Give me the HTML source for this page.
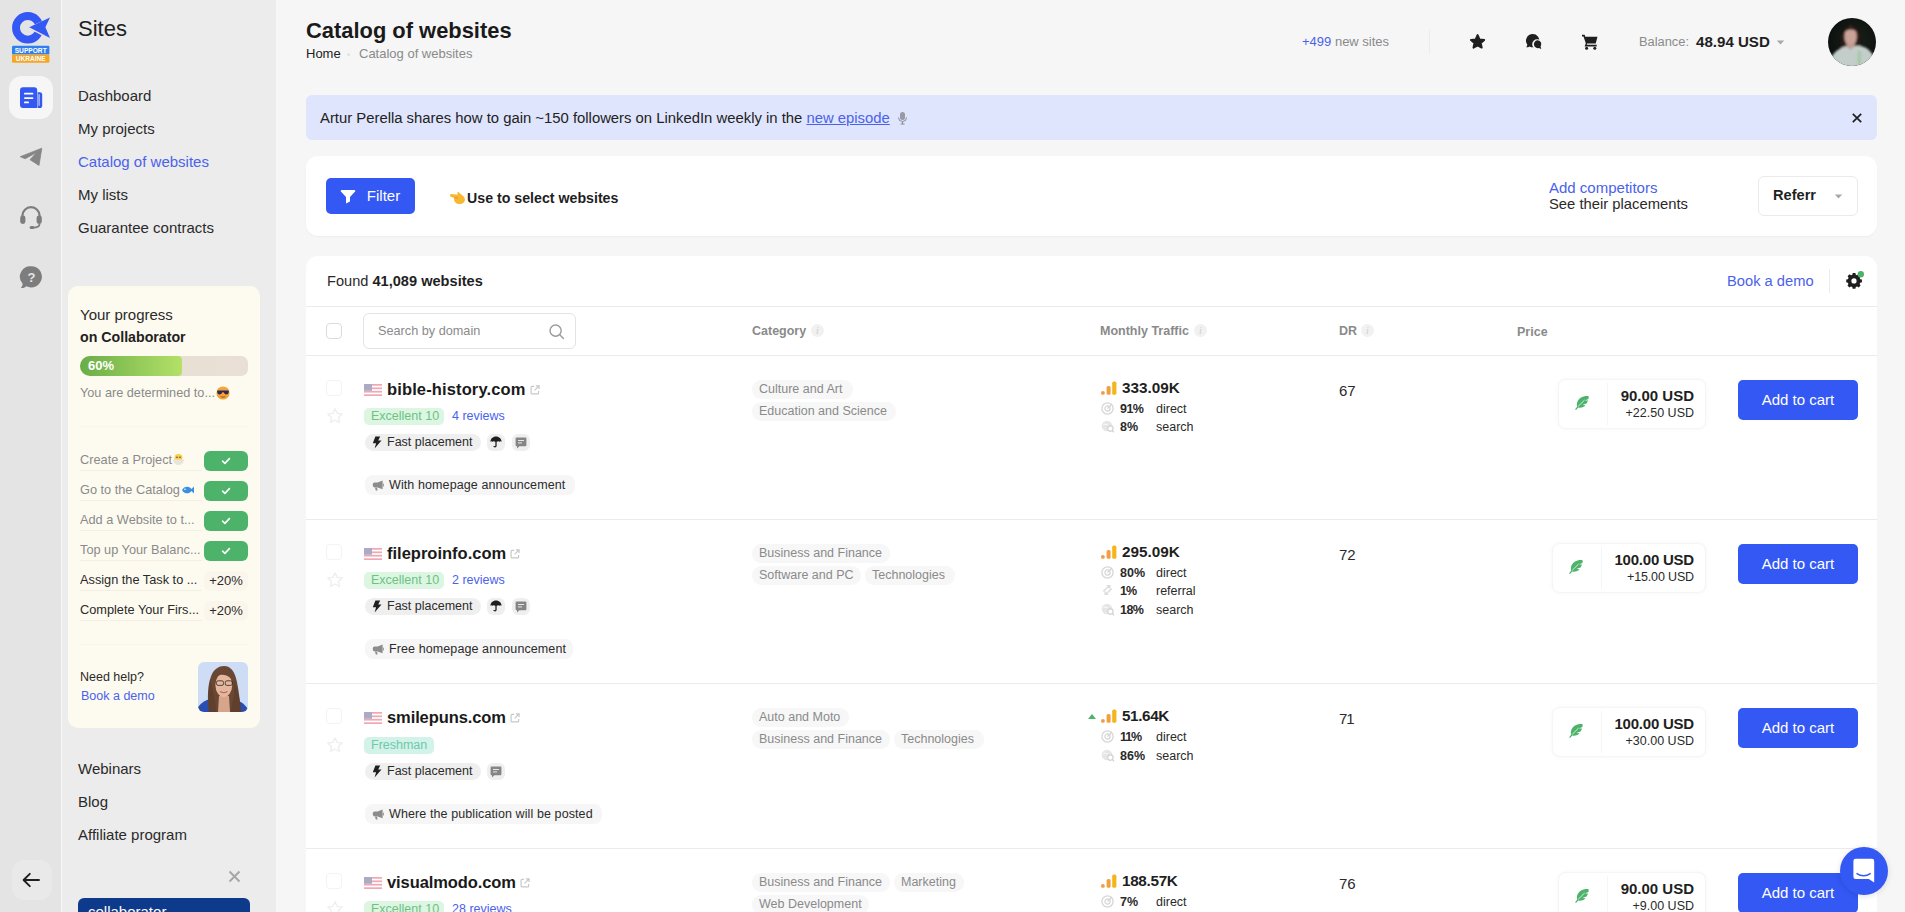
<!DOCTYPE html>
<html lang="en">
<head>
<meta charset="utf-8">
<title>Catalog of websites</title>
<style>
*{box-sizing:border-box;margin:0;padding:0}
html,body{width:1905px;height:912px;overflow:hidden;background:#f6f6f6;font-family:"Liberation Sans",sans-serif;color:#1f1f1f}
a{text-decoration:none;color:inherit}
.abs{position:absolute}
#rail{position:absolute;left:0;top:0;width:61px;height:912px;background:#e4e4e4}
#side{position:absolute;left:62px;top:0;width:214px;height:912px;background:#ececec}
#main{position:absolute;left:276px;top:0;width:1629px;height:912px;background:#f6f6f6}
.t{position:absolute;white-space:nowrap;line-height:1}
.blue{color:#4a62ea}
.grey{color:#8a8a8a}
/* sidebar */
.menu{position:absolute;left:78px;font-size:15px;color:#2a2a2a;white-space:nowrap;line-height:18px}
/* cards */
.card{position:absolute;background:#fff;border-radius:12px}
.btn{position:absolute;background:#3358f4;color:#fff;border-radius:5px;text-align:center;white-space:nowrap}
.pill{position:absolute;background:#f1f1f1;border-radius:9px;height:19px;line-height:19px;font-size:13px;color:#2b2b2b;white-space:nowrap}
.cat{position:absolute;background:#f7f7f7;border-radius:9px;height:19px;line-height:19px;font-size:13px;color:#8a8a8a;white-space:nowrap;padding:0 7px}
.hline{position:absolute;left:306px;width:1571px;height:1px;background:#ebebeb}
.cb{position:absolute;width:16px;height:16px;border:1px solid #e3e3e3;border-radius:4px;background:#fff}
</style>
</head>
<body>
<div id="main"></div>
<div id="side"></div>
<div id="rail"></div>

<!-- RAIL -->
<div id="rail-items">
<svg class="abs" style="left:8px;top:8px" width="48" height="60" viewBox="0 0 48 60">
  <circle cx="19.8" cy="19.8" r="11.8" fill="none" stroke="#3358f4" stroke-width="7.9"/>
  <path d="M19.2 19.7 L62.7 0.4 L62.7 42 L62 42 L20.6 20.5 Z" fill="#e4e4e4"/>
  <path d="M21.2 19.2 L42 9.6 L37.4 19.2 L42 30 Z" fill="#3358f4"/>
  <rect x="4" y="37.800" width="37.400" height="8.800" rx="1.200" fill="#2f80ed"/>
  <rect x="4" y="46.400" width="37.400" height="8.400" rx="1.200" fill="#f5a623"/>
  <text x="22.700" y="44.900" font-family="Liberation Sans, sans-serif" font-weight="bold" font-size="7.4" fill="#fff" text-anchor="middle" textLength="32" lengthAdjust="spacingAndGlyphs">SUPPORT</text>
  <text x="22.700" y="53.300" font-family="Liberation Sans, sans-serif" font-weight="bold" font-size="7.4" fill="#fff" text-anchor="middle" textLength="30" lengthAdjust="spacingAndGlyphs">UKRAINE</text>
</svg>
<div class="abs" style="left:9px;top:76px;width:44px;height:43px;border-radius:13px;background:#f6f6f6"></div>
<svg class="abs" style="left:19px;top:86px" width="24" height="24" viewBox="0 0 24 24">
  <path d="M4 1.2h11.2a3 3 0 0 1 3 3V22H4a3 3 0 0 1-3-3V4.2a3 3 0 0 1 3-3z" fill="#3358f4"/>
  <path d="M18.6 6.2h2.2a2.4 2.4 0 0 1 2.4 2.4V19.4a2.6 2.6 0 0 1-2.6 2.6h-2z" fill="#3358f4"/>
  <rect x="19.3" y="8" width="1.6" height="12" rx=".8" fill="#fff" opacity=".55"/>
  <rect x="5" y="6.8" width="9.4" height="1.7" rx=".85" fill="#fff"/>
  <rect x="5" y="11.2" width="9.4" height="1.7" rx=".85" fill="#fff"/>
  <rect x="5" y="15.6" width="5" height="1.7" rx=".85" fill="#fff"/>
</svg>
<svg class="abs" style="left:19px;top:145px" width="25" height="24" viewBox="0 0 25 24">
  <path d="M1.200 11.700 L22.800 3.200 L20 20.400 L11 14.700 L17.600 7.400 L6.200 13.700 Z" fill="#858585" stroke="#858585" stroke-width=".8" stroke-linejoin="round"/>
</svg>
<svg class="abs" style="left:19px;top:205px" width="24" height="25" viewBox="0 0 24 25">
  <path d="M3.4 12.4v-1.6a8.6 8.6 0 0 1 17.2 0v1.6" fill="none" stroke="#7d7d7d" stroke-width="2.2"/>
  <rect x="1.2" y="10.6" width="5.2" height="8.4" rx="2.4" fill="#7d7d7d"/>
  <rect x="17.6" y="10.6" width="5.2" height="8.4" rx="2.4" fill="#7d7d7d"/>
  <path d="M20.6 18.4c0 2.8-2.4 4.2-6.4 4.2" fill="none" stroke="#7d7d7d" stroke-width="1.8"/>
  <rect x="10.6" y="21" width="4.8" height="3" rx="1.5" fill="#7d7d7d"/>
</svg>
<svg class="abs" style="left:19px;top:265px" width="24" height="25" viewBox="0 0 24 25">
  <path d="M12.4 1.2a10.6 10.6 0 1 1-5 20 c-1.6 1.4-3.6 2-5.6 1.8 1.2-1.2 1.8-2.6 1.8-4.2a10.6 10.6 0 0 1 8.8-17.600z" fill="#7d7d7d"/>
  <text x="12.4" y="16.6" font-family="Liberation Sans, sans-serif" font-weight="bold" font-size="13" fill="#e4e4e4" text-anchor="middle">?</text>
</svg>
<div class="abs" style="left:12px;top:860px;width:40px;height:40px;border-radius:12px;background:#e9e9e9"></div>
<svg class="abs" style="left:21px;top:871px" width="20" height="18" viewBox="0 0 20 18">
  <path d="M8.800 2.800 L2.600 9 L8.800 15.200 M2.800 9 H18" fill="none" stroke="#1f1f1f" stroke-width="1.9" stroke-linecap="round" stroke-linejoin="round"/>
</svg>
</div>

<!-- SIDEBAR -->
<div class="t" style="left:78px;top:18px;font-size:22px;color:#222">Sites</div>
<div class="menu" style="top:87px">Dashboard</div>
<div class="menu" style="top:120px">My projects</div>
<div class="menu" style="top:153px;color:#4a62ea">Catalog of websites</div>
<div class="menu" style="top:186px">My lists</div>
<div class="menu" style="top:219px">Guarantee contracts</div>
<div id="progress">
<div class="abs" style="left:68px;top:286px;width:192px;height:442px;border-radius:10px;background:#fdfbf0"></div>
<div class="t" style="left:80px;top:307px;font-size:15px;color:#2a2a2a">Your progress</div>
<div class="t" style="left:80px;top:330px;font-size:14.200px;font-weight:bold;color:#222">on Collaborator</div>
<div class="abs" style="left:80px;top:356px;width:168px;height:20px;border-radius:10px 7px 7px 10px;background:linear-gradient(90deg,#e8e2d2,#e9dfd6)"></div>
<div class="abs" style="left:80px;top:356px;width:102px;height:20px;border-radius:10px 4px 4px 10px;background:linear-gradient(90deg,#69ad48,#b4e167)"></div>
<div class="t" style="left:88px;top:359px;font-size:13px;font-weight:bold;color:#fff">60%</div>
<div class="t" style="left:80px;top:386px;font-size:12.700px;color:#8a8a8a">You are determined to...<svg style="vertical-align:-3px;margin-left:1px" width="14" height="14" viewBox="0 0 14 14"><circle cx="7" cy="7" r="6.600" fill="#f5a33a"/><path d="M1.200 4.600h11.600v1.200c0 1.600-1 2.600-2.400 2.600S8 7.400 7.600 6.200h-1.200C6 7.400 5 8.400 3.600 8.400S1.200 7.400 1.200 5.800z" fill="#2a2a55"/><path d="M4.600 10.400c1.400 1 3.400 1 4.800 0" stroke="#8a4a10" stroke-width=".9" fill="none"/></svg></div>
<div class="abs" style="left:80px;top:426px;width:168px;height:1px;background:#f8f5ea"></div>
<div class="t" style="left:80px;top:453px;font-size:12.750px;color:#8a8a8a;border-bottom:1px solid #f4efe2;padding-bottom:3px;width:122px;overflow:hidden">Create a Project<svg style="vertical-align:-2px" width="13" height="13" viewBox="0 0 13 13"><circle cx="6.500" cy="5" r="4" fill="#f8cf4d"/><path d="M1 6.500h11a5.500 5.500 0 0 1-11 0z" fill="#e9e4dc"/><circle cx="5" cy="4.200" r=".7" fill="#333"/><circle cx="8" cy="4.200" r=".7" fill="#333"/></svg></div>
<div class="abs" style="left:204px;top:451px;width:44px;height:20px;border-radius:6px;background:#4db36a"></div>
<svg class="abs" style="left:220px;top:456px" width="12" height="10" viewBox="0 0 12 10"><path d="M2.600 5.200 L4.900 7.300 L9.400 2.700" fill="none" stroke="#fff" stroke-width="1.700" stroke-linecap="round" stroke-linejoin="round"/></svg>
<div class="t" style="left:80px;top:484px;font-size:12.750px;color:#8a8a8a;border-bottom:1px solid #f4efe2;padding-bottom:3px;width:122px;overflow:hidden">Go to the Catalog<svg style="vertical-align:-2px;margin-left:1px" width="14" height="12" viewBox="0 0 14 12"><path d="M1 6c2-4 7-4.500 9.500-1L13 2.500v7L10.500 7C8 10.500 3 10 1 6z" fill="#3b8fe0"/><circle cx="4" cy="5.200" r=".8" fill="#fff"/></svg></div>
<div class="abs" style="left:204px;top:481px;width:44px;height:20px;border-radius:6px;background:#4db36a"></div>
<svg class="abs" style="left:220px;top:486px" width="12" height="10" viewBox="0 0 12 10"><path d="M2.600 5.200 L4.900 7.300 L9.400 2.700" fill="none" stroke="#fff" stroke-width="1.700" stroke-linecap="round" stroke-linejoin="round"/></svg>
<div class="t" style="left:80px;top:514px;font-size:12.750px;color:#8a8a8a;border-bottom:1px solid #f4efe2;padding-bottom:3px;width:122px;overflow:hidden">Add a Website to t...</div>
<div class="abs" style="left:204px;top:511px;width:44px;height:20px;border-radius:6px;background:#4db36a"></div>
<svg class="abs" style="left:220px;top:516px" width="12" height="10" viewBox="0 0 12 10"><path d="M2.600 5.200 L4.900 7.300 L9.400 2.700" fill="none" stroke="#fff" stroke-width="1.700" stroke-linecap="round" stroke-linejoin="round"/></svg>
<div class="t" style="left:80px;top:544px;font-size:12.750px;color:#8a8a8a;border-bottom:1px solid #f4efe2;padding-bottom:3px;width:122px;overflow:hidden">Top up Your Balanc...</div>
<div class="abs" style="left:204px;top:541px;width:44px;height:20px;border-radius:6px;background:#4db36a"></div>
<svg class="abs" style="left:220px;top:546px" width="12" height="10" viewBox="0 0 12 10"><path d="M2.600 5.200 L4.900 7.300 L9.400 2.700" fill="none" stroke="#fff" stroke-width="1.700" stroke-linecap="round" stroke-linejoin="round"/></svg>
<div class="t" style="left:80px;top:574px;font-size:12.750px;color:#2a2a2a;border-bottom:1px solid #f4efe2;padding-bottom:3px;width:122px;overflow:hidden">Assign the Task to ...</div>
<div class="abs" style="left:204px;top:571px;width:44px;height:20px;border-radius:6px;background:#faf6ec;font-size:13px;line-height:20px;text-align:center;color:#2a2a2a">+20%</div>
<div class="t" style="left:80px;top:604px;font-size:12.750px;color:#2a2a2a;border-bottom:1px solid #f4efe2;padding-bottom:3px;width:122px;overflow:hidden">Complete Your Firs...</div>
<div class="abs" style="left:204px;top:601px;width:44px;height:20px;border-radius:6px;background:#faf6ec;font-size:13px;line-height:20px;text-align:center;color:#2a2a2a">+20%</div>

<div class="abs" style="left:80px;top:644px;width:168px;height:1px;background:#f8f5ea"></div>
<div class="t" style="left:80px;top:671px;font-size:12.5px;color:#2a2a2a">Need help?</div>
<div class="t" style="left:81px;top:690px;font-size:12.5px;color:#4a62ea">Book a demo</div>
<svg class="abs" style="left:198px;top:662px;border-radius:6px" width="50" height="50" viewBox="0 0 50 50">
  <defs><filter id="phb" x="-10%" y="-10%" width="120%" height="120%"><feGaussianBlur stdDeviation=".55"/></filter></defs>
  <rect width="50" height="50" fill="#cfdcf6"/>
  <g filter="url(#phb)">
  <path d="M0 50 L0 45 C4 40 8 38 12 37 L14 50Z" fill="#2a4db0"/>
  <path d="M50 50 L50 47 C47 43 44 40 40 38.500 L38 50Z" fill="#2a4db0"/>
  <path d="M11 50 C9 36 10 22 12.500 16 C15 7 21 4 26 4 C33 4 37 10 39 20 C41 30 42 40 43 50 Z" fill="#6a4733"/>
  <path d="M21 34 L31 34 L32 50 L20 50Z" fill="#d6a58b"/>
  <ellipse cx="25.800" cy="23" rx="8.400" ry="12" fill="#e4b79e"/>
  <path d="M16 20 C17 10 24 7 28 8 C34 9 36 16 36.500 22 C33 15 28 12 22 13 C19 14 17 17 16 20z" fill="#6a4733"/>
  <path d="M12.500 18 C14 24 15 30 16.500 36 C17.500 41 18 46 18 50 L11 50 C10 38 10.500 26 12.500 18z" fill="#5f3f2d"/>
  <path d="M35.500 20 C37 28 36 36 34 42 L33 50 L43 50 C42 38 40 26 35.500 20z" fill="#5f3f2d"/>
  <rect x="18.500" y="18.800" width="7" height="4.600" rx="1.600" fill="none" stroke="#2a2320" stroke-width=".9" opacity=".85"/>
  <rect x="27.300" y="18.800" width="7" height="4.600" rx="1.600" fill="none" stroke="#2a2320" stroke-width=".9" opacity=".85"/>
  <path d="M22 29.500c2.400 1.600 5 1.600 7.400 0" stroke="#b9705e" stroke-width="1.200" fill="none"/>
  </g>
</svg>
<svg class="abs" style="left:228px;top:870px" width="13" height="13" viewBox="0 0 13 13"><path d="M1.500 1.500 L11.500 11.500 M11.500 1.500 L1.500 11.500" stroke="#a6a6a6" stroke-width="1.900" fill="none"/></svg>
<div class="abs" style="left:78px;top:898px;width:172px;height:20px;border-radius:6px 6px 0 0;background:#0d3a8a;overflow:hidden"><div class="t" style="left:10px;top:6px;font-size:15px;color:#fff">collaborator</div></div>
</div>
<div class="menu" style="top:760px">Webinars</div>
<div class="menu" style="top:793px">Blog</div>
<div class="menu" style="top:826px">Affiliate program</div>

<!-- HEADER -->
<div class="t" style="left:306px;top:20px;font-size:21.900px;font-weight:bold;color:#1a1a1a">Catalog of websites</div>
<div class="t" style="left:306px;top:47px;font-size:13px;color:#222">Home</div>
<div class="t" style="left:359px;top:47px;font-size:13px;color:#8a8a8a">Catalog of websites</div>
<div class="abs" style="left:347px;top:53px;width:3px;height:3px;border-radius:2px;background:#e2e2e2"></div>
<div id="topright">
<div class="t" style="left:1302px;top:35px;font-size:13px;color:#8a8a8a"><span style="color:#4a62ea">+499</span> new sites</div>
<div class="abs" style="left:1429px;top:30px;width:1px;height:24px;background:#ececec"></div>
<svg class="abs" style="left:1469px;top:33px" width="18" height="18" viewBox="0 0 18 18"><path d="M8.600 2.100 L10.500 6.400 L15.200 6.900 L11.700 10 L12.700 14.600 L8.600 12.300 L4.500 14.600 L5.500 10 L2 6.900 L6.700 6.400 Z" fill="#1f1f1f" stroke="#1f1f1f" stroke-width="2" stroke-linejoin="round"/></svg>
<svg class="abs" style="left:1525px;top:33px" width="18" height="18" viewBox="0 0 18 18"><path d="M7.600 1a6.600 6.600 0 0 0-5.300 10.500c0 1-.4 2-1.100 2.800 1.200.1 2.400-.2 3.400-.9a6.600 6.600 0 1 0 3-12.400z" fill="#1f1f1f"/><circle cx="12.200" cy="11.200" r="5" fill="#f6f6f6"/><path d="M12.300 7.200a4 4 0 0 1 3.300 6.300c0 .8.300 1.500.8 2.100-.9.100-1.700-.1-2.400-.6a4 4 0 1 1-1.700-7.800z" fill="#1f1f1f"/></svg>
<svg class="abs" style="left:1581px;top:33px" width="18" height="18" viewBox="0 0 18 18"><path d="M1 1.800h2.600l.7 2h12.200l-1.800 6.600H6.200l-.5 1.400h10v1.600H3.600l1.200-3.200L2.500 3.400H1z" fill="#1f1f1f"/><circle cx="5.600" cy="15.200" r="1.500" fill="#1f1f1f"/><circle cx="13.800" cy="15.200" r="1.500" fill="#1f1f1f"/></svg>
<div class="t" style="left:1639px;top:35.800px;font-size:12.850px;color:#8a8a8a">Balance:</div>
<div class="t" style="left:1696px;top:33.500px;font-size:15.100px;font-weight:bold;color:#1f1f1f">48.94 USD</div>
<svg class="abs" style="left:1776px;top:40px" width="9" height="5" viewBox="0 0 9 5"><path d="M.8.600h7.400L4.500 4.400z" fill="#a8a8a8"/></svg>
<svg class="abs" style="left:1828px;top:18px;border-radius:24px" width="48" height="48" viewBox="0 0 48 48">
  <defs><radialGradient id="avg" cx="55%" cy="45%" r="65%"><stop offset="0" stop-color="#1a2119"/><stop offset="1" stop-color="#0a0e0c"/></radialGradient>
  <filter id="avb" x="-20%" y="-20%" width="140%" height="140%"><feGaussianBlur stdDeviation=".9"/></filter></defs>
  <rect width="48" height="48" fill="url(#avg)"/>
  <g filter="url(#avb)">
  <path d="M13 32 C11 18 15 8 23 8 C31 8 34 16 32 30 Z" fill="#2c1a15"/>
  <ellipse cx="22.600" cy="18.600" rx="6.200" ry="10" fill="#c9a398"/>
  <path d="M16.400 14 C17 7 28 7 29 14 C25.500 10.500 20 10.500 16.400 14z" fill="#2c1a15"/>
  <path d="M4 38 C8 32 14 29 18.500 28 L22 31 L27 28 C33 27 40 29 45 37 L44 50 L4 50 Z" fill="#c3cdca"/>
  <path d="M18.500 28 L22 31.500 L27 28 L26 25 L19 25Z" fill="#c39d90"/>
  <path d="M30 33 L33 33 L32.500 47 L29.500 47Z" fill="#9dc49a" opacity=".8"/>
  </g>
</svg>
</div>

<!-- BANNER -->
<div class="abs" style="left:306px;top:95px;width:1571px;height:45px;background:#dfe5fd;border-radius:6px"></div>
<div class="t" style="left:320px;top:111px;font-size:14.850px;color:#222">Artur Perella shares how to gain ~150 followers on LinkedIn weekly in the <span class="blue" style="text-decoration:underline">new episode</span></div>

<svg class="abs" style="left:1851px;top:112px" width="12" height="12" viewBox="0 0 12 12"><path d="M1.800 1.800 L10.200 10.200 M10.200 1.800 L1.800 10.200" stroke="#1f1f1f" stroke-width="1.700" fill="none"/></svg>
<svg class="abs" style="left:897px;top:111px" width="11" height="14" viewBox="0 0 11 14"><rect x="3" y="1" width="5" height="8" rx="2.500" fill="#9a9aa6"/><path d="M1.500 6.500a4 4 0 0 0 8 0M5.500 10.500V13M3.500 13h4" stroke="#8a8a96" stroke-width="1" fill="none"/></svg>
<!-- FILTER CARD -->
<div class="card" style="left:306px;top:156px;width:1571px;height:80px;box-shadow:0 1px 2px rgba(0,0,0,.04)"></div>
<div class="btn" style="left:326px;top:178px;width:89px;height:36px;line-height:36px;font-size:15px"><span style="margin-left:26px">Filter</span></div>

<svg class="abs" style="left:340px;top:189px" width="16" height="15" viewBox="0 0 16 15"><path d="M1.600 1h12.800a.9.900 0 0 1 .7 1.500L10 8v4.600l-4 1.800V8L.9 2.500A.9.900 0 0 1 1.600 1z" fill="#fff"/></svg>
<svg class="abs" style="left:449px;top:189px" width="17" height="16" viewBox="0 0 17 16"><path d="M1 6.500c0-1 .8-1.600 1.700-1.500l6 .7c-.6-1.200-.4-2.400.6-2.600 1 .6 2.400 2.200 3.600 3 1.800 1.100 3 2.600 3 4.600 0 2.600-2.200 4.300-5 4.300-2.600 0-4.500-1-5.300-2.600-.6-1.100-.6-2.300-.4-3.300L2.400 8C1.600 7.900 1 7.300 1 6.500z" fill="#f7b731"/><path d="M5.600 9c1.200-.6 2.800-.4 3.400.6" stroke="#d48a10" stroke-width=".8" fill="none"/></svg>
<div class="t" style="left:467px;top:190.500px;font-size:14.200px;font-weight:bold;color:#1f1f1f">Use to select websites</div>
<div class="t" style="left:1549px;top:180px;font-size:15px;color:#4a62ea">Add competitors</div>
<div class="t" style="left:1549px;top:197px;font-size:14.800px;color:#2a2a2a">See their placements</div>
<div class="abs" style="left:1758px;top:176px;width:100px;height:40px;border:1px solid #eaeaea;border-radius:6px;background:#fff"></div>
<div class="t" style="left:1773px;top:188px;font-size:14.600px;font-weight:bold;color:#1f1f1f">Referr</div>
<svg class="abs" style="left:1834px;top:194px" width="9" height="5" viewBox="0 0 9 5"><path d="M.8.600h7.400L4.500 4.400z" fill="#a8a8a8"/></svg>
<!-- TABLE CARD -->
<div class="card" style="left:306px;top:256px;width:1571px;height:700px"></div>
<div id="table">
<div class="t" style="left:327px;top:274px;font-size:14.600px;color:#2a2a2a">Found <b style="color:#1f1f1f">41,089 websites</b></div>
<div class="t" style="left:1727px;top:274px;font-size:14.700px;color:#4a62ea">Book a demo</div>
<div class="abs" style="left:1829px;top:269px;width:1px;height:24px;background:#ececec"></div>
<svg class="abs" style="left:1845px;top:271px" width="20" height="20" viewBox="0 0 20 20"><path d="M8 2.500h3l.4 1.900 1.500.7 1.700-1 2 2-1 1.700.6 1.500 1.900.400v3l-1.900.4-.6 1.500 1 1.700-2 2-1.700-1-1.500.6-.4 1.900h-3l-.4-1.900-1.500-.6-1.700 1-2-2 1-1.700-.6-1.500L1 12.700v-3l1.900-.4.600-1.500-1-1.700 2-2 1.700 1 1.500-.7z" fill="#1f1f1f" transform="translate(0.300,-0.400) scale(.92)"/><circle cx="9" cy="9.900" r="2.600" fill="#fff"/><circle cx="15.800" cy="3.200" r="3.200" fill="#4db36a"/></svg>
<div class="hline" style="top:306px"></div>
<div class="cb" style="left:326px;top:323px;border-color:#dcdcdc"></div>
<div class="abs" style="left:363px;top:313px;width:213px;height:36px;border:1px solid #e3e3e3;border-radius:6px;background:#fff"></div>
<div class="t" style="left:378px;top:325px;font-size:12.700px;color:#8a8a8a">Search by domain</div>
<svg class="abs" style="left:548px;top:323px" width="17" height="17" viewBox="0 0 17 17"><circle cx="7.600" cy="7.600" r="5.600" fill="none" stroke="#9a9a9a" stroke-width="1.400"/><path d="M11.800 11.800 L15.400 15.400" stroke="#9a9a9a" stroke-width="1.400" stroke-linecap="round"/></svg>
<div class="t" style="left:752px;top:325px;font-size:12.500px;font-weight:bold;color:#8a8a8a">Category</div>
<div class="t" style="left:1100px;top:325px;font-size:12.500px;font-weight:bold;color:#8a8a8a">Monthly Traffic</div>
<div class="t" style="left:1339px;top:325px;font-size:12.500px;font-weight:bold;color:#8a8a8a">DR</div>
<svg class="abs" style="left:811px;top:324px" width="13" height="13" viewBox="0 0 13 13"><circle cx="6.500" cy="6.500" r="6.500" fill="#f1f1f1"/><text x="6.500" y="10" font-family="Liberation Serif, serif" font-style="italic" font-size="10" fill="#cdcdcd" text-anchor="middle">i</text></svg>

<svg class="abs" style="left:1194px;top:324px" width="13" height="13" viewBox="0 0 13 13"><circle cx="6.500" cy="6.500" r="6.500" fill="#f1f1f1"/><text x="6.500" y="10" font-family="Liberation Serif, serif" font-style="italic" font-size="10" fill="#cdcdcd" text-anchor="middle">i</text></svg>

<svg class="abs" style="left:1361px;top:324px" width="13" height="13" viewBox="0 0 13 13"><circle cx="6.500" cy="6.500" r="6.500" fill="#f1f1f1"/><text x="6.500" y="10" font-family="Liberation Serif, serif" font-style="italic" font-size="10" fill="#cdcdcd" text-anchor="middle">i</text></svg>

<div class="t" style="left:1517px;top:326px;font-size:12.500px;font-weight:bold;color:#8a8a8a">Price</div>
<div class="hline" style="top:355px"></div>
<div class="cb" style="left:326px;top:380px;border-color:#f3f3f3"></div>
<svg class="abs" style="left:326px;top:407px" width="18" height="18" viewBox="0 0 18 18"><path d="M9 1.800 11.200 6.400 16.200 7 12.500 10.500 13.500 15.500 9 13 4.500 15.500 5.500 10.500 1.800 7 6.800 6.400Z" fill="none" stroke="#eeeeee" stroke-width="1.300" stroke-linejoin="round"/></svg>
<svg class="abs" style="left:364px;top:384px;opacity:.45" width="18" height="12" viewBox="0 0 18 12"><rect width="18" height="12" rx="1.500" fill="#fff"/><g fill="#e0435a"><rect y="0" width="18" height="1.720"/><rect y="3.430" width="18" height="1.720"/><rect y="6.860" width="18" height="1.720"/><rect y="10.290" width="18" height="1.710"/></g><rect width="8" height="6.800" fill="#46467f"/></svg>
<div class="t" style="left:387px;top:381px;font-size:16.500px;font-weight:bold;color:#1a1a1a;letter-spacing:0.13px">bible-history.com<span style="letter-spacing:0"><svg style="margin-left:4px;vertical-align:0px" width="10" height="10" viewBox="0 0 11 11"><path d="M4.500 1.500H2.200a1 1 0 0 0-1 1v6.300a1 1 0 0 0 1 1h6.300a1 1 0 0 0 1-1V6.500M6.500 1h3.500v3.500M9.700 1.300 5 6" fill="none" stroke="#c8c8c8" stroke-width="1.300"/></svg></span></div>
<div class="abs" style="left:364px;top:408px;width:80px;height:17px;border-radius:5px;background:#dcf6e1"></div>
<div class="t" style="left:371px;top:410px;font-size:12.500px;color:#6cc285">Excellent 10</div>
<div class="t" style="left:452px;top:410px;font-size:12.500px;color:#4a62ea">4 reviews</div>
<div class="pill" style="left:365px;top:434px;width:116px;height:17px;background:#efefef"></div>
<svg class="abs" style="left:372px;top:436px" width="10" height="13" viewBox="0 0 10 13"><path d="M3.400.5h4.800L6.200 4.600h3.300L2.600 12.600l1.500-5.400H.8z" fill="#1f1f1f"/></svg>
<div class="t" style="left:387px;top:436px;font-size:12.500px;color:#2b2b2b">Fast placement</div>
<div class="pill" style="left:487px;top:434px;width:18px;height:17px;background:#efefef;border-radius:6px"></div>
<svg class="abs" style="left:490px;top:436px" width="12" height="12" viewBox="0 0 12 12"><path d="M6 .6C2.800.6.500 2.900.4 5.800c.6-.8 1.500-.8 2 0 .6-.9 1.900-.9 2.700 0h1.800c.8-.9 2.100-.9 2.700 0 .5-.8 1.400-.8 2 0C11.500 2.900 9.200.6 6 .6z" fill="#1f1f1f"/><path d="M6 1v8.800c0 1.400-2 1.400-2 .1" stroke="#1f1f1f" stroke-width="1.300" fill="none"/></svg>
<div class="pill" style="left:512px;top:434px;width:18px;height:17px;background:#efefef;border-radius:6px"></div>
<svg class="abs" style="left:515px;top:437px" width="12" height="12" viewBox="0 0 12 12"><path d="M1.600.6h8.800a1 1 0 0 1 1 1v6.600a1 1 0 0 1-1 1H4.400L2 11.400V9.200h-.4a1 1 0 0 1-1-1V1.600a1 1 0 0 1 1-1z" fill="#858585"/><rect x="3" y="3" width="6" height="1" fill="#fff" opacity=".8"/><rect x="3" y="5.400" width="4" height="1" fill="#fff" opacity=".8"/></svg>
<div class="pill" style="left:365px;top:475px;height:20px;width:210px;background:#f6f6f6;border-radius:8px"></div>
<svg class="abs" style="left:372px;top:480px" width="12" height="11" viewBox="0 0 12 11"><path d="M10.600.6v8.600L5.600 7.400H2.600A1.800 1.800 0 0 1 .8 5.600v-1.400a1.800 1.800 0 0 1 1.800-1.800h3z" fill="#8c8c8c"/><path d="M3 7.800l.8 2.600h1.800l-.6-2.600z" fill="#8c8c8c"/><rect x="10.800" y="3.400" width="1" height="3" rx=".5" fill="#8c8c8c"/></svg>
<div class="t" style="left:389px;top:479px;font-size:12.500px;color:#2b2b2b;letter-spacing:.1px">With homepage announcement</div>
<div class="cat" style="left:752px;top:380px;width:101px"></div><div class="t" style="left:759px;top:383px;font-size:12.500px;color:#8a8a8a">Culture and Art</div>
<div class="cat" style="left:752px;top:402px;width:144px"></div><div class="t" style="left:759px;top:405px;font-size:12.500px;color:#8a8a8a">Education and Science</div>
<svg class="abs" style="left:1100px;top:381px" width="17" height="15" viewBox="0 0 17 15"><rect x="1" y="10" width="3.800" height="3.800" rx="1.900" fill="#f2994a"/><rect x="6.600" y="5" width="4" height="8.800" rx="1.600" fill="#f2a03c"/><rect x="12.200" y=".6" width="4.200" height="13.200" rx="1.600" fill="#f5b31c"/></svg>
<div class="t" style="left:1122px;top:380px;font-size:15.300px;font-weight:bold;color:#1f1f1f;letter-spacing:0px">333.09K</div>
<svg class="abs" style="left:1101px;top:402.0px" width="13" height="13" viewBox="0 0 13 13"><circle cx="6.500" cy="6.500" r="5.600" fill="none" stroke="#d6d6d6" stroke-width="1.300"/><circle cx="6.500" cy="6.500" r="2.600" fill="none" stroke="#d6d6d6" stroke-width="1.200"/><path d="M6.500 6.500 L11 2" stroke="#d6d6d6" stroke-width="1.200"/></svg>
<div class="t" style="left:1120px;top:402.5px;font-size:12.500px;font-weight:bold;color:#2a2a2a;letter-spacing:-0.567px">91%</div>
<div class="t" style="left:1156px;top:402.5px;font-size:12.500px;color:#2a2a2a">direct</div>
<svg class="abs" style="left:1101px;top:420.0px" width="14" height="13" viewBox="0 0 14 13"><circle cx="6" cy="6" r="5.300" fill="#e6e6e6"/><circle cx="9.400" cy="8.600" r="2.700" fill="#fff" stroke="#d2d2d2" stroke-width="1.200"/><path d="M11.300 10.600 13 12.300" stroke="#d2d2d2" stroke-width="1.300"/><path d="M2.500 4.500c1.500-.8 2.500.5 4 0" stroke="#fff" stroke-width="1" fill="none"/></svg>
<div class="t" style="left:1120px;top:420.5px;font-size:12.500px;font-weight:bold;color:#2a2a2a;letter-spacing:0px">8%</div>
<div class="t" style="left:1156px;top:420.5px;font-size:12.500px;color:#2a2a2a">search</div>
<div class="t" style="left:1339px;top:383px;font-size:15px;color:#2a2a2a;letter-spacing:0px">67</div>
<div class="abs" style="left:1558px;top:379px;width:148px;height:50px;border:1px solid #f5f5f5;border-radius:8px;background:#fff;box-shadow:0 0 5px rgba(0,0,0,.04)"></div>
<div class="abs" style="left:1607px;top:383px;width:1px;height:42px;background:#f5f5f5"></div>
<svg class="abs" style="left:1574px;top:395px" width="16" height="16" viewBox="0 0 16 16"><path d="M14.600 1.200C9.600.600 4.200 2.800 3 8.200c-.3 1.300-.1 2.500.3 3.300L1.100 14.300l.9.700 2.300-2.600c1.200.5 2.800.5 4.200-.1 1.300-.5 2.300-1.300 3-2.100L8.300 10.100l4.200-1.500c.7-1.100 1.200-2.200 1.500-3.200L10.900 5.500l3.500-1.400c.3-1 .3-2 .2-2.900z" fill="#4db36a"/><path d="M4.200 11.400 10.600 5" stroke="#fff" stroke-width=".9" fill="none" opacity=".85"/></svg>
<div class="t" style="right:211px;top:388px;font-size:15px;font-weight:bold;color:#1f1f1f;letter-spacing:0px">90.00 USD</div>
<div class="t" style="right:211px;top:407px;font-size:12.500px;color:#2a2a2a;letter-spacing:0px">+22.50 USD</div>
<div class="btn" style="left:1738px;top:380px;width:120px;height:40px;line-height:40px;font-size:15px">Add to cart</div>
<div class="hline" style="top:519px"></div>
<div class="cb" style="left:326px;top:544px;border-color:#f3f3f3"></div>
<svg class="abs" style="left:326px;top:571px" width="18" height="18" viewBox="0 0 18 18"><path d="M9 1.800 11.200 6.400 16.200 7 12.500 10.500 13.500 15.500 9 13 4.500 15.500 5.500 10.500 1.800 7 6.800 6.400Z" fill="none" stroke="#eeeeee" stroke-width="1.300" stroke-linejoin="round"/></svg>
<svg class="abs" style="left:364px;top:548px;opacity:.45" width="18" height="12" viewBox="0 0 18 12"><rect width="18" height="12" rx="1.500" fill="#fff"/><g fill="#e0435a"><rect y="0" width="18" height="1.720"/><rect y="3.430" width="18" height="1.720"/><rect y="6.860" width="18" height="1.720"/><rect y="10.290" width="18" height="1.710"/></g><rect width="8" height="6.800" fill="#46467f"/></svg>
<div class="t" style="left:387px;top:545px;font-size:16.500px;font-weight:bold;color:#1a1a1a;letter-spacing:0px">fileproinfo.com<span style="letter-spacing:0"><svg style="margin-left:4px;vertical-align:0px" width="10" height="10" viewBox="0 0 11 11"><path d="M4.500 1.500H2.200a1 1 0 0 0-1 1v6.300a1 1 0 0 0 1 1h6.300a1 1 0 0 0 1-1V6.500M6.500 1h3.500v3.500M9.700 1.300 5 6" fill="none" stroke="#c8c8c8" stroke-width="1.300"/></svg></span></div>
<div class="abs" style="left:364px;top:572px;width:80px;height:17px;border-radius:5px;background:#dcf6e1"></div>
<div class="t" style="left:371px;top:574px;font-size:12.500px;color:#6cc285">Excellent 10</div>
<div class="t" style="left:452px;top:574px;font-size:12.500px;color:#4a62ea">2 reviews</div>
<div class="pill" style="left:365px;top:598px;width:116px;height:17px;background:#efefef"></div>
<svg class="abs" style="left:372px;top:600px" width="10" height="13" viewBox="0 0 10 13"><path d="M3.400.5h4.800L6.200 4.600h3.300L2.600 12.600l1.500-5.400H.8z" fill="#1f1f1f"/></svg>
<div class="t" style="left:387px;top:600px;font-size:12.500px;color:#2b2b2b">Fast placement</div>
<div class="pill" style="left:487px;top:598px;width:18px;height:17px;background:#efefef;border-radius:6px"></div>
<svg class="abs" style="left:490px;top:600px" width="12" height="12" viewBox="0 0 12 12"><path d="M6 .6C2.800.6.500 2.900.4 5.800c.6-.8 1.500-.8 2 0 .6-.9 1.900-.9 2.700 0h1.800c.8-.9 2.100-.9 2.700 0 .5-.8 1.400-.8 2 0C11.500 2.900 9.200.6 6 .6z" fill="#1f1f1f"/><path d="M6 1v8.800c0 1.400-2 1.400-2 .1" stroke="#1f1f1f" stroke-width="1.300" fill="none"/></svg>
<div class="pill" style="left:512px;top:598px;width:18px;height:17px;background:#efefef;border-radius:6px"></div>
<svg class="abs" style="left:515px;top:601px" width="12" height="12" viewBox="0 0 12 12"><path d="M1.600.6h8.800a1 1 0 0 1 1 1v6.600a1 1 0 0 1-1 1H4.400L2 11.400V9.200h-.4a1 1 0 0 1-1-1V1.600a1 1 0 0 1 1-1z" fill="#858585"/><rect x="3" y="3" width="6" height="1" fill="#fff" opacity=".8"/><rect x="3" y="5.400" width="4" height="1" fill="#fff" opacity=".8"/></svg>
<div class="pill" style="left:365px;top:639px;height:20px;width:208px;background:#f6f6f6;border-radius:8px"></div>
<svg class="abs" style="left:372px;top:644px" width="12" height="11" viewBox="0 0 12 11"><path d="M10.600.6v8.600L5.600 7.400H2.600A1.800 1.800 0 0 1 .8 5.600v-1.400a1.800 1.800 0 0 1 1.800-1.800h3z" fill="#8c8c8c"/><path d="M3 7.800l.8 2.600h1.800l-.6-2.600z" fill="#8c8c8c"/><rect x="10.800" y="3.400" width="1" height="3" rx=".5" fill="#8c8c8c"/></svg>
<div class="t" style="left:389px;top:643px;font-size:12.500px;color:#2b2b2b;letter-spacing:.1px">Free homepage announcement</div>
<div class="cat" style="left:752px;top:544px;width:138px"></div><div class="t" style="left:759px;top:547px;font-size:12.500px;color:#8a8a8a">Business and Finance</div>
<div class="cat" style="left:752px;top:566px;width:109px"></div><div class="t" style="left:759px;top:569px;font-size:12.500px;color:#8a8a8a">Software and PC</div>
<div class="cat" style="left:865px;top:566px;width:90px"></div><div class="t" style="left:872px;top:569px;font-size:12.500px;color:#8a8a8a">Technologies</div>
<svg class="abs" style="left:1100px;top:545px" width="17" height="15" viewBox="0 0 17 15"><rect x="1" y="10" width="3.800" height="3.800" rx="1.900" fill="#f2994a"/><rect x="6.600" y="5" width="4" height="8.800" rx="1.600" fill="#f2a03c"/><rect x="12.200" y=".6" width="4.200" height="13.200" rx="1.600" fill="#f5b31c"/></svg>
<div class="t" style="left:1122px;top:544px;font-size:15.300px;font-weight:bold;color:#1f1f1f;letter-spacing:0px">295.09K</div>
<svg class="abs" style="left:1101px;top:566.0px" width="13" height="13" viewBox="0 0 13 13"><circle cx="6.500" cy="6.500" r="5.600" fill="none" stroke="#d6d6d6" stroke-width="1.300"/><circle cx="6.500" cy="6.500" r="2.600" fill="none" stroke="#d6d6d6" stroke-width="1.200"/><path d="M6.500 6.500 L11 2" stroke="#d6d6d6" stroke-width="1.200"/></svg>
<div class="t" style="left:1120px;top:566.5px;font-size:12.500px;font-weight:bold;color:#2a2a2a;letter-spacing:0px">80%</div>
<div class="t" style="left:1156px;top:566.5px;font-size:12.500px;color:#2a2a2a">direct</div>
<svg class="abs" style="left:1101px;top:584.0px" width="13" height="12" viewBox="0 0 13 12"><path d="M2.200 7.200 8.600 1.800M5.600 1.600h3.200v3.200M10.800 4.800 4.400 10.200M7.400 10.400H4.200V7.200" fill="none" stroke="#dcdcdc" stroke-width="1.400"/></svg>
<div class="t" style="left:1120px;top:584.5px;font-size:12.500px;font-weight:bold;color:#2a2a2a;letter-spacing:-0.85px">1%</div>
<div class="t" style="left:1156px;top:584.5px;font-size:12.500px;color:#2a2a2a">referral</div>
<svg class="abs" style="left:1101px;top:603.3px" width="14" height="13" viewBox="0 0 14 13"><circle cx="6" cy="6" r="5.300" fill="#e6e6e6"/><circle cx="9.400" cy="8.600" r="2.700" fill="#fff" stroke="#d2d2d2" stroke-width="1.200"/><path d="M11.300 10.600 13 12.300" stroke="#d2d2d2" stroke-width="1.300"/><path d="M2.500 4.500c1.500-.8 2.500.5 4 0" stroke="#fff" stroke-width="1" fill="none"/></svg>
<div class="t" style="left:1120px;top:603.8px;font-size:12.500px;font-weight:bold;color:#2a2a2a;letter-spacing:-0.567px">18%</div>
<div class="t" style="left:1156px;top:603.8px;font-size:12.500px;color:#2a2a2a">search</div>
<div class="t" style="left:1339px;top:547px;font-size:15px;color:#2a2a2a;letter-spacing:0px">72</div>
<div class="abs" style="left:1552px;top:543px;width:154px;height:50px;border:1px solid #f5f5f5;border-radius:8px;background:#fff;box-shadow:0 0 5px rgba(0,0,0,.04)"></div>
<div class="abs" style="left:1601px;top:547px;width:1px;height:42px;background:#f5f5f5"></div>
<svg class="abs" style="left:1568px;top:559px" width="16" height="16" viewBox="0 0 16 16"><path d="M14.600 1.200C9.600.600 4.200 2.800 3 8.200c-.3 1.300-.1 2.500.3 3.300L1.100 14.300l.9.700 2.300-2.600c1.200.5 2.800.5 4.200-.1 1.300-.5 2.300-1.300 3-2.100L8.300 10.100l4.200-1.500c.7-1.100 1.200-2.200 1.500-3.200L10.900 5.500l3.500-1.400c.3-1 .3-2 .2-2.900z" fill="#4db36a"/><path d="M4.200 11.400 10.600 5" stroke="#fff" stroke-width=".9" fill="none" opacity=".85"/></svg>
<div class="t" style="right:211px;top:552px;font-size:15px;font-weight:bold;color:#1f1f1f;letter-spacing:-0.22px">100.00 USD</div>
<div class="t" style="right:211px;top:571px;font-size:12.500px;color:#2a2a2a;letter-spacing:-0.15px">+15.00 USD</div>
<div class="btn" style="left:1738px;top:544px;width:120px;height:40px;line-height:40px;font-size:15px">Add to cart</div>
<div class="hline" style="top:683px"></div>
<div class="cb" style="left:326px;top:708px;border-color:#f3f3f3"></div>
<svg class="abs" style="left:326px;top:736px" width="18" height="18" viewBox="0 0 18 18"><path d="M9 1.800 11.200 6.400 16.200 7 12.500 10.500 13.500 15.500 9 13 4.500 15.500 5.500 10.500 1.800 7 6.800 6.400Z" fill="none" stroke="#eeeeee" stroke-width="1.300" stroke-linejoin="round"/></svg>
<svg class="abs" style="left:364px;top:712px;opacity:.45" width="18" height="12" viewBox="0 0 18 12"><rect width="18" height="12" rx="1.500" fill="#fff"/><g fill="#e0435a"><rect y="0" width="18" height="1.720"/><rect y="3.430" width="18" height="1.720"/><rect y="6.860" width="18" height="1.720"/><rect y="10.290" width="18" height="1.710"/></g><rect width="8" height="6.800" fill="#46467f"/></svg>
<div class="t" style="left:387px;top:709px;font-size:16.500px;font-weight:bold;color:#1a1a1a;letter-spacing:-0.1px">smilepuns.com<span style="letter-spacing:0"><svg style="margin-left:4px;vertical-align:0px" width="10" height="10" viewBox="0 0 11 11"><path d="M4.500 1.500H2.200a1 1 0 0 0-1 1v6.300a1 1 0 0 0 1 1h6.300a1 1 0 0 0 1-1V6.500M6.500 1h3.500v3.500M9.700 1.300 5 6" fill="none" stroke="#c8c8c8" stroke-width="1.300"/></svg></span></div>
<div class="abs" style="left:364px;top:737px;width:70px;height:17px;border-radius:5px;background:#d3f3e8"></div>
<div class="t" style="left:371px;top:739px;font-size:12.500px;color:#6cc9ad">Freshman</div>
<div class="pill" style="left:365px;top:763px;width:116px;height:17px;background:#efefef"></div>
<svg class="abs" style="left:372px;top:765px" width="10" height="13" viewBox="0 0 10 13"><path d="M3.400.5h4.800L6.200 4.600h3.300L2.600 12.600l1.500-5.400H.8z" fill="#1f1f1f"/></svg>
<div class="t" style="left:387px;top:765px;font-size:12.500px;color:#2b2b2b">Fast placement</div>
<div class="pill" style="left:487px;top:763px;width:18px;height:17px;background:#efefef;border-radius:6px"></div>
<svg class="abs" style="left:490px;top:766px" width="12" height="12" viewBox="0 0 12 12"><path d="M1.600.6h8.800a1 1 0 0 1 1 1v6.600a1 1 0 0 1-1 1H4.400L2 11.400V9.200h-.4a1 1 0 0 1-1-1V1.600a1 1 0 0 1 1-1z" fill="#858585"/><rect x="3" y="3" width="6" height="1" fill="#fff" opacity=".8"/><rect x="3" y="5.400" width="4" height="1" fill="#fff" opacity=".8"/></svg>
<div class="pill" style="left:365px;top:804px;height:20px;width:237px;background:#f6f6f6;border-radius:8px"></div>
<svg class="abs" style="left:372px;top:809px" width="12" height="11" viewBox="0 0 12 11"><path d="M10.600.6v8.600L5.600 7.400H2.600A1.800 1.800 0 0 1 .8 5.600v-1.400a1.800 1.800 0 0 1 1.800-1.800h3z" fill="#8c8c8c"/><path d="M3 7.800l.8 2.600h1.800l-.6-2.600z" fill="#8c8c8c"/><rect x="10.800" y="3.400" width="1" height="3" rx=".5" fill="#8c8c8c"/></svg>
<div class="t" style="left:389px;top:808px;font-size:12.500px;color:#2b2b2b;letter-spacing:.1px">Where the publication will be posted</div>
<div class="cat" style="left:752px;top:708px;width:97px"></div><div class="t" style="left:759px;top:711px;font-size:12.500px;color:#8a8a8a">Auto and Moto</div>
<div class="cat" style="left:752px;top:730px;width:138px"></div><div class="t" style="left:759px;top:733px;font-size:12.500px;color:#8a8a8a">Business and Finance</div>
<div class="cat" style="left:894px;top:730px;width:90px"></div><div class="t" style="left:901px;top:733px;font-size:12.500px;color:#8a8a8a">Technologies</div>
<svg class="abs" style="left:1088px;top:714px" width="8" height="5" viewBox="0 0 8 5"><path d="M4 0 8 5H0z" fill="#4db36a"/></svg>
<svg class="abs" style="left:1100px;top:709px" width="17" height="15" viewBox="0 0 17 15"><rect x="1" y="10" width="3.800" height="3.800" rx="1.900" fill="#f2994a"/><rect x="6.600" y="5" width="4" height="8.800" rx="1.600" fill="#f2a03c"/><rect x="12.200" y=".6" width="4.200" height="13.200" rx="1.600" fill="#f5b31c"/></svg>
<div class="t" style="left:1122px;top:708px;font-size:15.300px;font-weight:bold;color:#1f1f1f;letter-spacing:-0.383px">51.64K</div>
<svg class="abs" style="left:1101px;top:730.0px" width="13" height="13" viewBox="0 0 13 13"><circle cx="6.500" cy="6.500" r="5.600" fill="none" stroke="#d6d6d6" stroke-width="1.300"/><circle cx="6.500" cy="6.500" r="2.600" fill="none" stroke="#d6d6d6" stroke-width="1.200"/><path d="M6.500 6.500 L11 2" stroke="#d6d6d6" stroke-width="1.200"/></svg>
<div class="t" style="left:1120px;top:730.5px;font-size:12.500px;font-weight:bold;color:#2a2a2a;letter-spacing:-1.133px">11%</div>
<div class="t" style="left:1156px;top:730.5px;font-size:12.500px;color:#2a2a2a">direct</div>
<svg class="abs" style="left:1101px;top:749.0px" width="14" height="13" viewBox="0 0 14 13"><circle cx="6" cy="6" r="5.300" fill="#e6e6e6"/><circle cx="9.400" cy="8.600" r="2.700" fill="#fff" stroke="#d2d2d2" stroke-width="1.200"/><path d="M11.300 10.600 13 12.300" stroke="#d2d2d2" stroke-width="1.300"/><path d="M2.500 4.500c1.500-.8 2.500.5 4 0" stroke="#fff" stroke-width="1" fill="none"/></svg>
<div class="t" style="left:1120px;top:749.5px;font-size:12.500px;font-weight:bold;color:#2a2a2a;letter-spacing:0px">86%</div>
<div class="t" style="left:1156px;top:749.5px;font-size:12.500px;color:#2a2a2a">search</div>
<div class="t" style="left:1339px;top:711px;font-size:15px;color:#2a2a2a;letter-spacing:-1.1px">71</div>
<div class="abs" style="left:1552px;top:707px;width:154px;height:50px;border:1px solid #f5f5f5;border-radius:8px;background:#fff;box-shadow:0 0 5px rgba(0,0,0,.04)"></div>
<div class="abs" style="left:1601px;top:711px;width:1px;height:42px;background:#f5f5f5"></div>
<svg class="abs" style="left:1568px;top:723px" width="16" height="16" viewBox="0 0 16 16"><path d="M14.600 1.200C9.600.600 4.200 2.800 3 8.200c-.3 1.300-.1 2.500.3 3.300L1.100 14.300l.9.700 2.300-2.600c1.200.5 2.800.5 4.200-.1 1.300-.5 2.300-1.300 3-2.100L8.300 10.100l4.200-1.500c.7-1.100 1.200-2.200 1.500-3.200L10.900 5.500l3.500-1.400c.3-1 .3-2 .2-2.900z" fill="#4db36a"/><path d="M4.200 11.400 10.600 5" stroke="#fff" stroke-width=".9" fill="none" opacity=".85"/></svg>
<div class="t" style="right:211px;top:716px;font-size:15px;font-weight:bold;color:#1f1f1f;letter-spacing:-0.22px">100.00 USD</div>
<div class="t" style="right:211px;top:735px;font-size:12.500px;color:#2a2a2a;letter-spacing:0px">+30.00 USD</div>
<div class="btn" style="left:1738px;top:708px;width:120px;height:40px;line-height:40px;font-size:15px">Add to cart</div>
<div class="hline" style="top:848px"></div>
<div class="cb" style="left:326px;top:873px;border-color:#f3f3f3"></div>
<svg class="abs" style="left:326px;top:900px" width="18" height="18" viewBox="0 0 18 18"><path d="M9 1.800 11.200 6.400 16.200 7 12.500 10.500 13.500 15.500 9 13 4.500 15.500 5.500 10.500 1.800 7 6.800 6.400Z" fill="none" stroke="#eeeeee" stroke-width="1.300" stroke-linejoin="round"/></svg>
<svg class="abs" style="left:364px;top:877px;opacity:.45" width="18" height="12" viewBox="0 0 18 12"><rect width="18" height="12" rx="1.500" fill="#fff"/><g fill="#e0435a"><rect y="0" width="18" height="1.720"/><rect y="3.430" width="18" height="1.720"/><rect y="6.860" width="18" height="1.720"/><rect y="10.290" width="18" height="1.710"/></g><rect width="8" height="6.800" fill="#46467f"/></svg>
<div class="t" style="left:387px;top:874px;font-size:16.500px;font-weight:bold;color:#1a1a1a;letter-spacing:-0.09px">visualmodo.com<span style="letter-spacing:0"><svg style="margin-left:4px;vertical-align:0px" width="10" height="10" viewBox="0 0 11 11"><path d="M4.500 1.500H2.200a1 1 0 0 0-1 1v6.300a1 1 0 0 0 1 1h6.300a1 1 0 0 0 1-1V6.500M6.500 1h3.500v3.500M9.700 1.300 5 6" fill="none" stroke="#c8c8c8" stroke-width="1.300"/></svg></span></div>
<div class="abs" style="left:364px;top:901px;width:80px;height:17px;border-radius:5px;background:#dcf6e1"></div>
<div class="t" style="left:371px;top:903px;font-size:12.500px;color:#6cc285">Excellent 10</div>
<div class="t" style="left:452px;top:903px;font-size:12.500px;color:#4a62ea">28 reviews</div>
<div class="pill" style="left:365px;top:927px;width:116px;height:17px;background:#efefef"></div>
<svg class="abs" style="left:372px;top:929px" width="10" height="13" viewBox="0 0 10 13"><path d="M3.400.5h4.800L6.200 4.600h3.300L2.600 12.600l1.500-5.400H.8z" fill="#1f1f1f"/></svg>
<div class="t" style="left:387px;top:929px;font-size:12.500px;color:#2b2b2b">Fast placement</div>
<div class="pill" style="left:487px;top:927px;width:18px;height:17px;background:#efefef;border-radius:6px"></div>
<svg class="abs" style="left:490px;top:929px" width="12" height="12" viewBox="0 0 12 12"><path d="M6 .6C2.800.6.500 2.900.4 5.800c.6-.8 1.500-.8 2 0 .6-.9 1.900-.9 2.700 0h1.800c.8-.9 2.100-.9 2.700 0 .5-.8 1.400-.8 2 0C11.500 2.900 9.200.6 6 .6z" fill="#1f1f1f"/><path d="M6 1v8.800c0 1.400-2 1.400-2 .1" stroke="#1f1f1f" stroke-width="1.300" fill="none"/></svg>
<div class="pill" style="left:512px;top:927px;width:18px;height:17px;background:#efefef;border-radius:6px"></div>
<svg class="abs" style="left:515px;top:930px" width="12" height="12" viewBox="0 0 12 12"><path d="M1.600.6h8.800a1 1 0 0 1 1 1v6.600a1 1 0 0 1-1 1H4.400L2 11.400V9.200h-.4a1 1 0 0 1-1-1V1.600a1 1 0 0 1 1-1z" fill="#858585"/><rect x="3" y="3" width="6" height="1" fill="#fff" opacity=".8"/><rect x="3" y="5.400" width="4" height="1" fill="#fff" opacity=".8"/></svg>
<div class="pill" style="left:365px;top:968px;height:20px;width:10px;background:#f6f6f6;border-radius:8px"></div>
<svg class="abs" style="left:372px;top:973px" width="12" height="11" viewBox="0 0 12 11"><path d="M10.600.6v8.600L5.600 7.400H2.600A1.800 1.800 0 0 1 .8 5.600v-1.400a1.800 1.800 0 0 1 1.800-1.800h3z" fill="#8c8c8c"/><path d="M3 7.800l.8 2.600h1.800l-.6-2.600z" fill="#8c8c8c"/><rect x="10.800" y="3.400" width="1" height="3" rx=".5" fill="#8c8c8c"/></svg>
<div class="t" style="left:389px;top:972px;font-size:12.500px;color:#2b2b2b;letter-spacing:.1px">x</div>
<div class="cat" style="left:752px;top:873px;width:138px"></div><div class="t" style="left:759px;top:876px;font-size:12.500px;color:#8a8a8a">Business and Finance</div>
<div class="cat" style="left:894px;top:873px;width:70px"></div><div class="t" style="left:901px;top:876px;font-size:12.500px;color:#8a8a8a">Marketing</div>
<div class="cat" style="left:752px;top:895px;width:117px"></div><div class="t" style="left:759px;top:898px;font-size:12.500px;color:#8a8a8a">Web Development</div>
<svg class="abs" style="left:1100px;top:874px" width="17" height="15" viewBox="0 0 17 15"><rect x="1" y="10" width="3.800" height="3.800" rx="1.900" fill="#f2994a"/><rect x="6.600" y="5" width="4" height="8.800" rx="1.600" fill="#f2a03c"/><rect x="12.200" y=".6" width="4.200" height="13.200" rx="1.600" fill="#f5b31c"/></svg>
<div class="t" style="left:1122px;top:873px;font-size:15.300px;font-weight:bold;color:#1f1f1f;letter-spacing:-0.329px">188.57K</div>
<svg class="abs" style="left:1101px;top:895.0px" width="13" height="13" viewBox="0 0 13 13"><circle cx="6.500" cy="6.500" r="5.600" fill="none" stroke="#d6d6d6" stroke-width="1.300"/><circle cx="6.500" cy="6.500" r="2.600" fill="none" stroke="#d6d6d6" stroke-width="1.200"/><path d="M6.500 6.500 L11 2" stroke="#d6d6d6" stroke-width="1.200"/></svg>
<div class="t" style="left:1120px;top:895.5px;font-size:12.500px;font-weight:bold;color:#2a2a2a;letter-spacing:0px">7%</div>
<div class="t" style="left:1156px;top:895.5px;font-size:12.500px;color:#2a2a2a">direct</div>
<div class="t" style="left:1339px;top:876px;font-size:15px;color:#2a2a2a;letter-spacing:0px">76</div>
<div class="abs" style="left:1558px;top:872px;width:148px;height:50px;border:1px solid #f5f5f5;border-radius:8px;background:#fff;box-shadow:0 0 5px rgba(0,0,0,.04)"></div>
<div class="abs" style="left:1607px;top:876px;width:1px;height:42px;background:#f5f5f5"></div>
<svg class="abs" style="left:1574px;top:888px" width="16" height="16" viewBox="0 0 16 16"><path d="M14.600 1.200C9.600.600 4.200 2.800 3 8.200c-.3 1.300-.1 2.500.3 3.300L1.100 14.300l.9.700 2.300-2.600c1.200.5 2.800.5 4.200-.1 1.300-.5 2.300-1.300 3-2.100L8.300 10.100l4.200-1.500c.7-1.100 1.200-2.200 1.500-3.200L10.900 5.500l3.500-1.400c.3-1 .3-2 .2-2.900z" fill="#4db36a"/><path d="M4.200 11.400 10.600 5" stroke="#fff" stroke-width=".9" fill="none" opacity=".85"/></svg>
<div class="t" style="right:211px;top:881px;font-size:15px;font-weight:bold;color:#1f1f1f;letter-spacing:0px">90.00 USD</div>
<div class="t" style="right:211px;top:900px;font-size:12.500px;color:#2a2a2a;letter-spacing:0px">+9.00 USD</div>
<div class="btn" style="left:1738px;top:873px;width:120px;height:40px;line-height:40px;font-size:15px">Add to cart</div>
<div class="hline" style="top:1012px"></div>
<div class="abs" style="left:1840px;top:847px;width:48px;height:48px;border-radius:24px;background:#3358f4;box-shadow:0 1px 6px rgba(0,0,0,.12)"></div>
<svg class="abs" style="left:1852px;top:857px" width="24" height="28" viewBox="0 0 24 28"><path d="M3.600 1.800h16.400a2.200 2.200 0 0 1 2.200 2.200v21.400l-5.400-3.400H3.600a2.200 2.200 0 0 1-2.200-2.200V4a2.200 2.200 0 0 1 2.200-2.200z" fill="#fff"/><path d="M5 16.600c3.800 2.800 9.400 2.800 13.200 0" stroke="#3358f4" stroke-width="1.400" fill="none" stroke-linecap="round"/></svg>
</div>

</body>
</html>
